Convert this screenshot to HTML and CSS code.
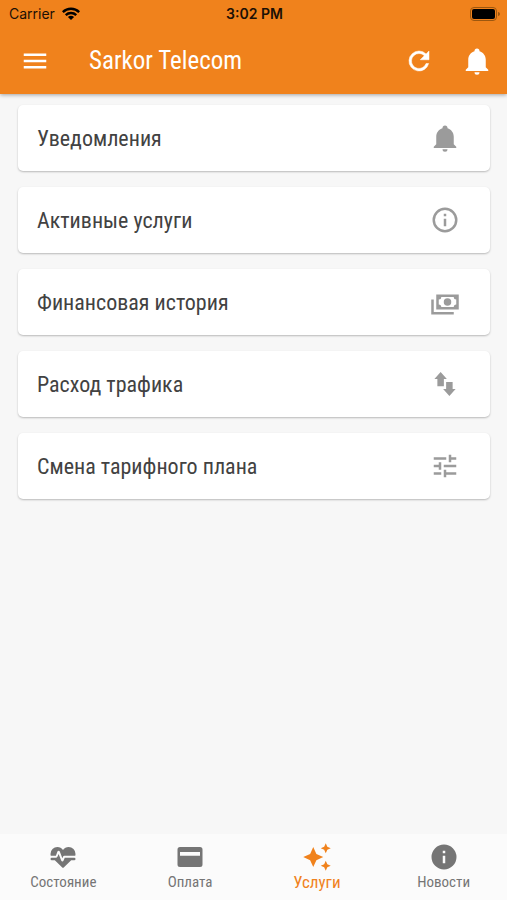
FILE: index.html
```html
<!DOCTYPE html>
<html lang="ru">
<head>
    <meta charset="UTF-8">
    <meta name="viewport" content="width=device-width, initial-scale=1.0">
    <title>Sarkor Telecom</title>
    <link rel="stylesheet" href="styles.css">
</head>
<body>
    <header class="header">
        <div class="status-bar">
            <div class="carrier">
                <span>Carrier</span>
                <svg class="wifi" viewBox="0 0 18 13">
                    <path d="M0 4.2a12.8 12.8 0 0 1 18 0l-1.7 1.8a10.3 10.3 0 0 0-14.6 0z"/>
                    <path d="M2.9 7.2a8.7 8.7 0 0 1 12.2 0L13.4 9a6.2 6.2 0 0 0-8.8 0z"/>
                    <path d="M5.9 10.1a4.5 4.5 0 0 1 6.2 0L9 13z"/>
                </svg>
            </div>
            <div class="time">3:02 PM</div>
            <svg class="battery" viewBox="0 0 30 14">
                <rect x="0.5" y="0.5" width="26" height="13" rx="3.5" fill="none" stroke="#9c570f"/>
                <rect x="2" y="2" width="23" height="10" rx="2"/>
                <path d="M28 5v4c1.300-.4 2-1.200 2-2s-.7-1.600-2-2z" fill="#9c570f"/>
            </svg>
        </div>
        <div class="toolbar">
            <button class="icon-button" type="button" aria-label="Меню">
                <svg class="icon" viewBox="0 0 24 24"><path d="M3 6h18v2H3V6m0 5h18v2H3v-2m0 5h18v2H3v-2z"/></svg>
            </button>
            <h1 class="title">Sarkor Telecom</h1>
            <button class="icon-button" type="button" aria-label="Обновить">
                <svg class="icon refresh" viewBox="0 0 24 24"><path d="M17.650 6.350A7.960 7.960 0 0 0 12 4a8 8 0 1 0 7.730 10h-2.080A6 6 0 1 1 12 6c1.660 0 3.140.69 4.220 1.780L13 11h7V4l-2.350 2.350z"/></svg>
            </button>
            <button class="icon-button" type="button" aria-label="Уведомления">
                <svg class="icon" viewBox="0 0 24 24"><path d="M21 19v1H3v-1l2-2v-6c0-3.100 2.030-5.830 5-6.710V4a2 2 0 0 1 4 0v.29c2.970.88 5 3.610 5 6.710v6l2 2m-7 2a2 2 0 0 1-4 0"/></svg>
            </button>
        </div>
    </header>

    <main class="menu">
        <button class="card" type="button">
            <span>Уведомления</span>
            <svg class="icon" viewBox="0 0 24 24"><path d="M21 19v1H3v-1l2-2v-6c0-3.100 2.030-5.830 5-6.710V4a2 2 0 0 1 4 0v.29c2.970.88 5 3.610 5 6.710v6l2 2m-7 2a2 2 0 0 1-4 0"/></svg>
        </button>
        <button class="card" type="button">
            <span>Активные услуги</span>
            <svg class="icon" viewBox="0 0 24 24"><path d="M11 9h2V7h-2m1 13a8 8 0 1 1 0-16 8 8 0 0 1 0 16m0-18a10 10 0 1 0 0 20 10 10 0 0 0 0-20m-1 15h2v-6h-2v6z"/></svg>
        </button>
        <button class="card" type="button">
            <span>Финансовая история</span>
            <svg class="icon" viewBox="0 0 24 24"><path d="M5 6h18v12H5V6m9 3a3 3 0 1 1 0 6 3 3 0 0 1 0-6M9 8a2 2 0 0 1-2 2v4a2 2 0 0 1 2 2h10a2 2 0 0 1 2-2v-4a2 2 0 0 1-2-2H9m-8 2h2v10h16v2H1V10z"/></svg>
        </button>
        <button class="card" type="button">
            <span>Расход трафика</span>
            <svg class="icon" viewBox="0 0 24 24"><path d="M8.500 2.300 3.500 8h2.400v5.700h5.200V8h2.400l-5-5.700M15.500 21.600l5-5.700h-2.400v-5.600h-5.200v5.600h-2.400l5 5.700z"/></svg>
        </button>
        <button class="card" type="button">
            <span>Смена тарифного плана</span>
            <svg class="icon" viewBox="0 0 24 24"><path d="M3 17v2h6v-2H3M3 5v2h10V5H3m10 16v-2h8v-2h-8v-2h-2v6h2M7 9v2H3v2h4v2h2V9H7m14 4v-2H11v2h10m-6-4h2V7h4V5h-4V3h-2v6z"/></svg>
        </button>
    </main>

    <nav class="tabs">
        <a class="tab" href="#status">
            <svg class="icon" viewBox="0 0 24 24"><path d="M7.500 4A5.500 5.500 0 0 0 2 9.500c0 .5.090 1 .22 1.500H6.300l1.270-3.430c.3-.8 1.480-.88 1.860 0L11.500 13l.59-1.420c.13-.33.480-.58.910-.58h8.780c.13-.5.220-1 .22-1.500A5.500 5.500 0 0 0 16.500 4c-1.860 0-3.500.93-4.500 2.340C11 4.930 9.360 4 7.500 4M3 12.500a1 1 0 0 0 0 2h2.440L11 20c1 .9 1 .9 2 0l5.560-5.500H21a1 1 0 0 0 0-2h-7.600l-.93 2.300c-.4 1.010-1.550.87-1.920.03L8.500 9.500l-.96 2.330c-.15.380-.49.670-.94.670H3z"/></svg>
            <span>Состояние</span>
        </a>
        <a class="tab" href="#payment">
            <svg class="icon" viewBox="0 0 24 24"><path d="M4 4h16a2 2 0 0 1 2 2v12a2 2 0 0 1-2 2H4a2 2 0 0 1-2-2V6a2 2 0 0 1 2-2m0 4v3h16V8H4z"/></svg>
            <span>Оплата</span>
        </a>
        <a class="tab active" href="#services" aria-current="page">
            <svg class="icon" viewBox="0 0 24 24"><path d="M19 1l-1.260 2.750L15 5l2.740 1.260L19 9l1.250-2.740L23 5l-2.750-1.250M9 4 6.500 9.500 1 12l5.500 2.500L9 20l2.500-5.500L17 12l-5.500-2.500M19 15l-1.260 2.740L15 19l2.740 1.250L19 23l1.250-2.750L23 19l-2.750-1.260"/></svg>
            <span>Услуги</span>
        </a>
        <a class="tab" href="#news">
            <svg class="icon" viewBox="0 0 24 24"><path d="M13 9h-2V7h2m0 10h-2v-6h2m-1-9a10 10 0 1 0 0 20 10 10 0 0 0 0-20z"/></svg>
            <span>Новости</span>
        </a>
    </nav>
</body>
</html>
```

FILE: styles.css
```css
* {
    box-sizing: border-box;
}
body {
    margin: 0;
    min-height: 100vh;
    display: flex;
    flex-direction: column;
    background: #f7f7f7;
    color: #424242;
    font-family: "Roboto Condensed", "Liberation Sans Narrow", Roboto, sans-serif;
}
button {
    border: none;
    font-family: inherit;
    color: inherit;
    cursor: pointer;
}
.icon {
    display: block;
    width: 30px;
    height: 30px;
    fill: currentColor;
}

/* Header */
.header {
    background: #f0821c;
    box-shadow: 0 1px 4px rgba(0,0,0,0.35);
}
.status-bar {
    display: grid;
    grid-template-columns: 1fr auto 1fr;
    align-items: center;
    height: 27px;
    padding: 0 7px 0 9px;
    color: #1c1005;
    font-family: Inter, sans-serif;
    font-size: 14px;
}
.carrier {
    display: flex;
    align-items: center;
    gap: 7px;
}
.wifi {
    width: 18px;
    height: 13px;
}
.time {
    font-weight: 600;
}
.battery {
    width: 30px;
    height: 14px;
    justify-self: end;
}
.toolbar {
    display: flex;
    align-items: center;
    gap: 28px;
    height: 67px;
    padding: 0 15px 0 20px;
    color: white;
}
.icon-button {
    padding: 0;
    background: none;
}
.refresh {
    stroke: currentColor;
    stroke-width: 0.4;
}
.title {
    flex: 1;
    margin: 0 0 0 11px;
    font-size: 25px;
    font-weight: 400;
}

/* Cards */
.menu {
    flex: 1;
    display: flex;
    flex-direction: column;
    gap: 16px;
    padding: 11px 17px 16px 18px;
}
.card {
    display: flex;
    align-items: center;
    justify-content: space-between;
    min-height: 66px;
    padding: 0 30px 0 19px;
    background: white;
    border-radius: 5px;
    box-shadow: 0 1px 2px rgba(0,0,0,0.25);
    font-size: 22px;
    text-align: left;
}
.card .icon {
    color: #9b9b9b;
}

/* Bottom tabs */
.tabs {
    display: grid;
    grid-template-columns: repeat(4, 1fr);
    height: 66px;
    background: #fbfbfb;
}
.tab {
    display: flex;
    flex-direction: column;
    align-items: center;
    justify-content: center;
    color: #757575;
    font-size: 15px;
    line-height: 20px;
    text-decoration: none;
}
.tab.active {
    color: #f0821c;
    font-size: 17px;
}
```
